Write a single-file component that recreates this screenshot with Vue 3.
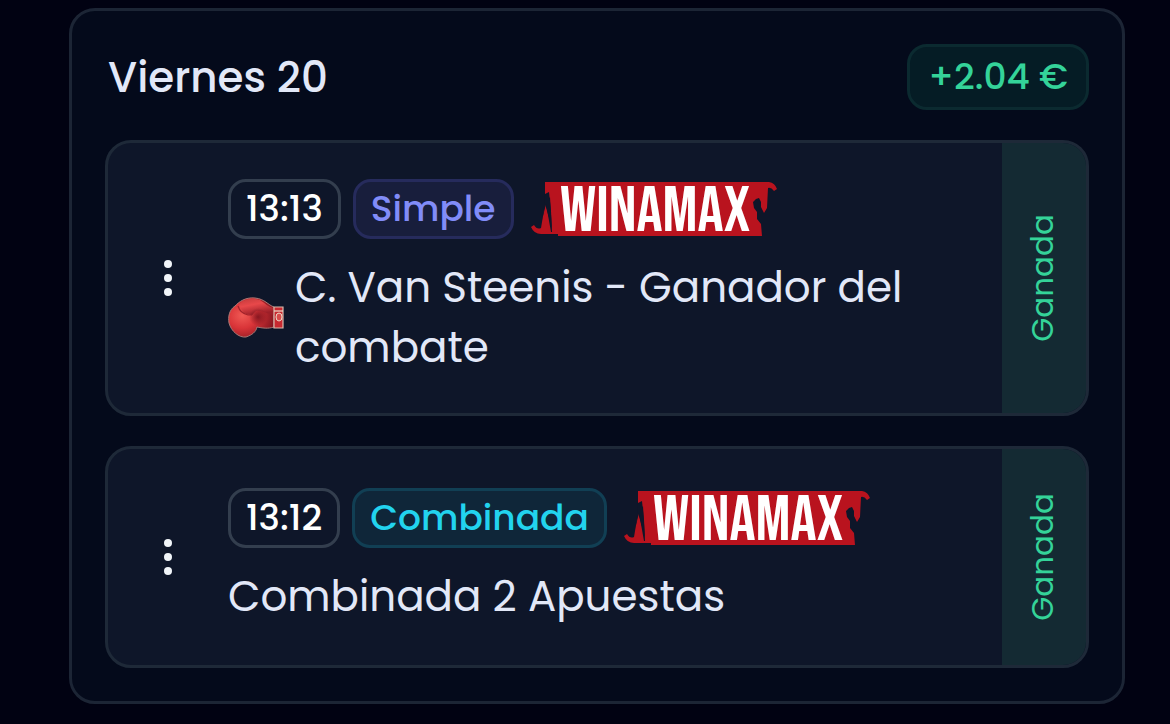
<script setup>
const day = { title: 'Viernes 20', profit: '+2.04 €' }
const bets = [
  { time: '13:13', type: 'Simple', kind: 'simple', title: 'C. Van Steenis - Ganador del combate', boxing: true, status: 'Ganada' },
  { time: '13:12', type: 'Combinada', kind: 'combined', title: 'Combinada 2 Apuestas', boxing: false, status: 'Ganada' },
]
</script>

<template>
  <main class="page">
    <section class="day">
      <header class="day-head">
        <h2>{{ day.title }}</h2>
        <span class="profit">{{ day.profit }}</span>
      </header>
      <article v-for="bet in bets" :key="bet.time" class="bet">
        <button class="menu" type="button" aria-label="Opciones">
          <svg width="12" height="40" viewBox="0 0 12 40" fill="#f1f5f9" aria-hidden="true">
            <circle cx="6" cy="6" r="4" /><circle cx="6" cy="20" r="4" /><circle cx="6" cy="34" r="4" />
          </svg>
        </button>
        <div class="body">
          <div class="tags">
            <span class="tag time">{{ bet.time }}</span>
            <span class="tag" :class="bet.kind">{{ bet.type }}</span>
            <svg class="logo" width="246" height="56" viewBox="0 0 246 56" role="img" aria-label="Winamax">
              <path fill="#b9131e" d="M14 1H238Q244 2 246 8L243 10Q240 6 237 7L236 27L233 32L230 26V21L228 17L225 18L222 21L223 27L226 31V38L230 43L231 55H27V53H10Q3 53 0 46L3 44Q6 49 10 47L14 23L19 40L21 50L19 16L16 20V13H14Z" />
              <path fill="#0e1629" d="M14 13L18 11L20 30L21 51H20L15 23L11 39L13 26Z" />
              <text x="124" y="50" text-anchor="middle">WINAMAX</text>
            </svg>
          </div>
          <div class="event">
            <svg v-if="bet.boxing" class="glove" width="56" height="42" viewBox="0 0 56 42" aria-hidden="true">
              <defs>
                <radialGradient id="leather" cx=".3" cy=".45" r=".72">
                  <stop offset="0" stop-color="#f05a55" />
                  <stop offset=".45" stop-color="#d93438" />
                  <stop offset="1" stop-color="#85161f" />
                </radialGradient>
                <linearGradient id="thumb" x1="0" y1="0" x2=".4" y2="1">
                  <stop offset="0" stop-color="#c33a3b" />
                  <stop offset=".45" stop-color="#e8484a" />
                  <stop offset="1" stop-color="#9c1f28" />
                </linearGradient>
                <radialGradient id="fold">
                  <stop offset="0" stop-color="#6d0e19" stop-opacity=".75" />
                  <stop offset="1" stop-color="#6d0e19" stop-opacity="0" />
                </radialGradient>
              </defs>
              <path fill="url(#leather)" stroke="#a87875" stroke-width="1" d="M46 10C40 8 37 2 27 1C17 0 11 5 7 9C1 13 0 20 1 26C3 34 11 41 18 40C24 38 28 35 29 30C34 31 40 32 46 30Z" />
              <path fill="url(#thumb)" d="M11 8C15 2 25 0 32 3C38 7 40 10 46 11V18C39 17 34 13 28 14C25 16 25 19 23 18C18 18 14 15 11 8Z" />
              <ellipse cx="30" cy="20" rx="9" ry="9" fill="url(#fold)" />
              <path fill="none" stroke="#a3232b" stroke-width="1.2" d="M10 9Q12 16 20 18L24 18" />
              <path fill="#c82930" stroke="#d9b9ac" stroke-width="1.2" d="M46 10H55V31H46Z" />
              <path fill="none" stroke="#ecd9c8" stroke-width="1.2" d="M46 14H55" />
              <ellipse cx="51" cy="20" rx="3" ry="4" fill="#d84a4a" stroke="#ecd9c8" stroke-width="1" />
            </svg>
            <p>{{ bet.title }}</p>
          </div>
        </div>
        <div class="status"><span>{{ bet.status }}</span></div>
      </article>
    </section>
  </main>
</template>

<style>
body { background: #010212; }
</style>

<style scoped>
.page { padding: 8px 45px 20px 69px; background: #010212; font-family: Poppins, Inter, sans-serif; color: #e2e8f8; }
.day { display: flex; flex-direction: column; gap: 30px; padding: 33px; border: 3px solid #1c2535; border-radius: 26px; background: #040a1b; }
.day-head { display: flex; align-items: center; justify-content: space-between; padding-left: 3px; }
h2 { margin: 0; font-size: 42px; line-height: 62px; font-weight: 500; padding-top: 2px; }
.profit { padding: 0 18px; border: 3px solid #0b2a30; border-radius: 20px; background: #051c25; color: #34d399; font-size: 36px; line-height: 60px; font-weight: 500; }
.bet { display: flex; min-height: 216px; border: 3px solid #1e2938; border-radius: 26px; background: #0e1629; overflow: hidden; }
.menu { flex: 0 0 120px; display: flex; align-items: center; justify-content: center; padding: 0; border: 0; background: none; }
.body { flex: 1; min-width: 0; display: flex; flex-direction: column; justify-content: center; gap: 19px; padding: 36px 36px 35px 0; }
.tags { display: flex; align-items: center; gap: 12px; }
.tag { padding: 0 15px; border: 3px solid; border-radius: 18px; font-size: 36px; line-height: 54px; font-weight: 500; }
.time { color: #fff; border-color: #333e4e; }
.simple { color: #818cf8; border-color: #262b5c; background: #181e3c; }
.combined { color: #22d3ee; border-color: #113f54; background: #0f2639; }
.logo { margin-left: 5px; overflow: visible; }
.logo text { fill: #fff; font-family: "Bebas Neue", Oswald, Roboto, sans-serif; font-size: 65px; font-weight: 400; }
.event { display: flex; align-items: center; gap: 11px; }
.glove { flex: none; }
p { margin: 0; font-size: 42px; line-height: 60px; }
.status { flex: 0 0 84px; box-sizing: border-box; padding-right: 4px; display: flex; align-items: center; justify-content: center; background: #142a33; color: #34d399; font-size: 31px; line-height: 44px; }
.status span { writing-mode: vertical-rl; transform: rotate(180deg); }
</style>
